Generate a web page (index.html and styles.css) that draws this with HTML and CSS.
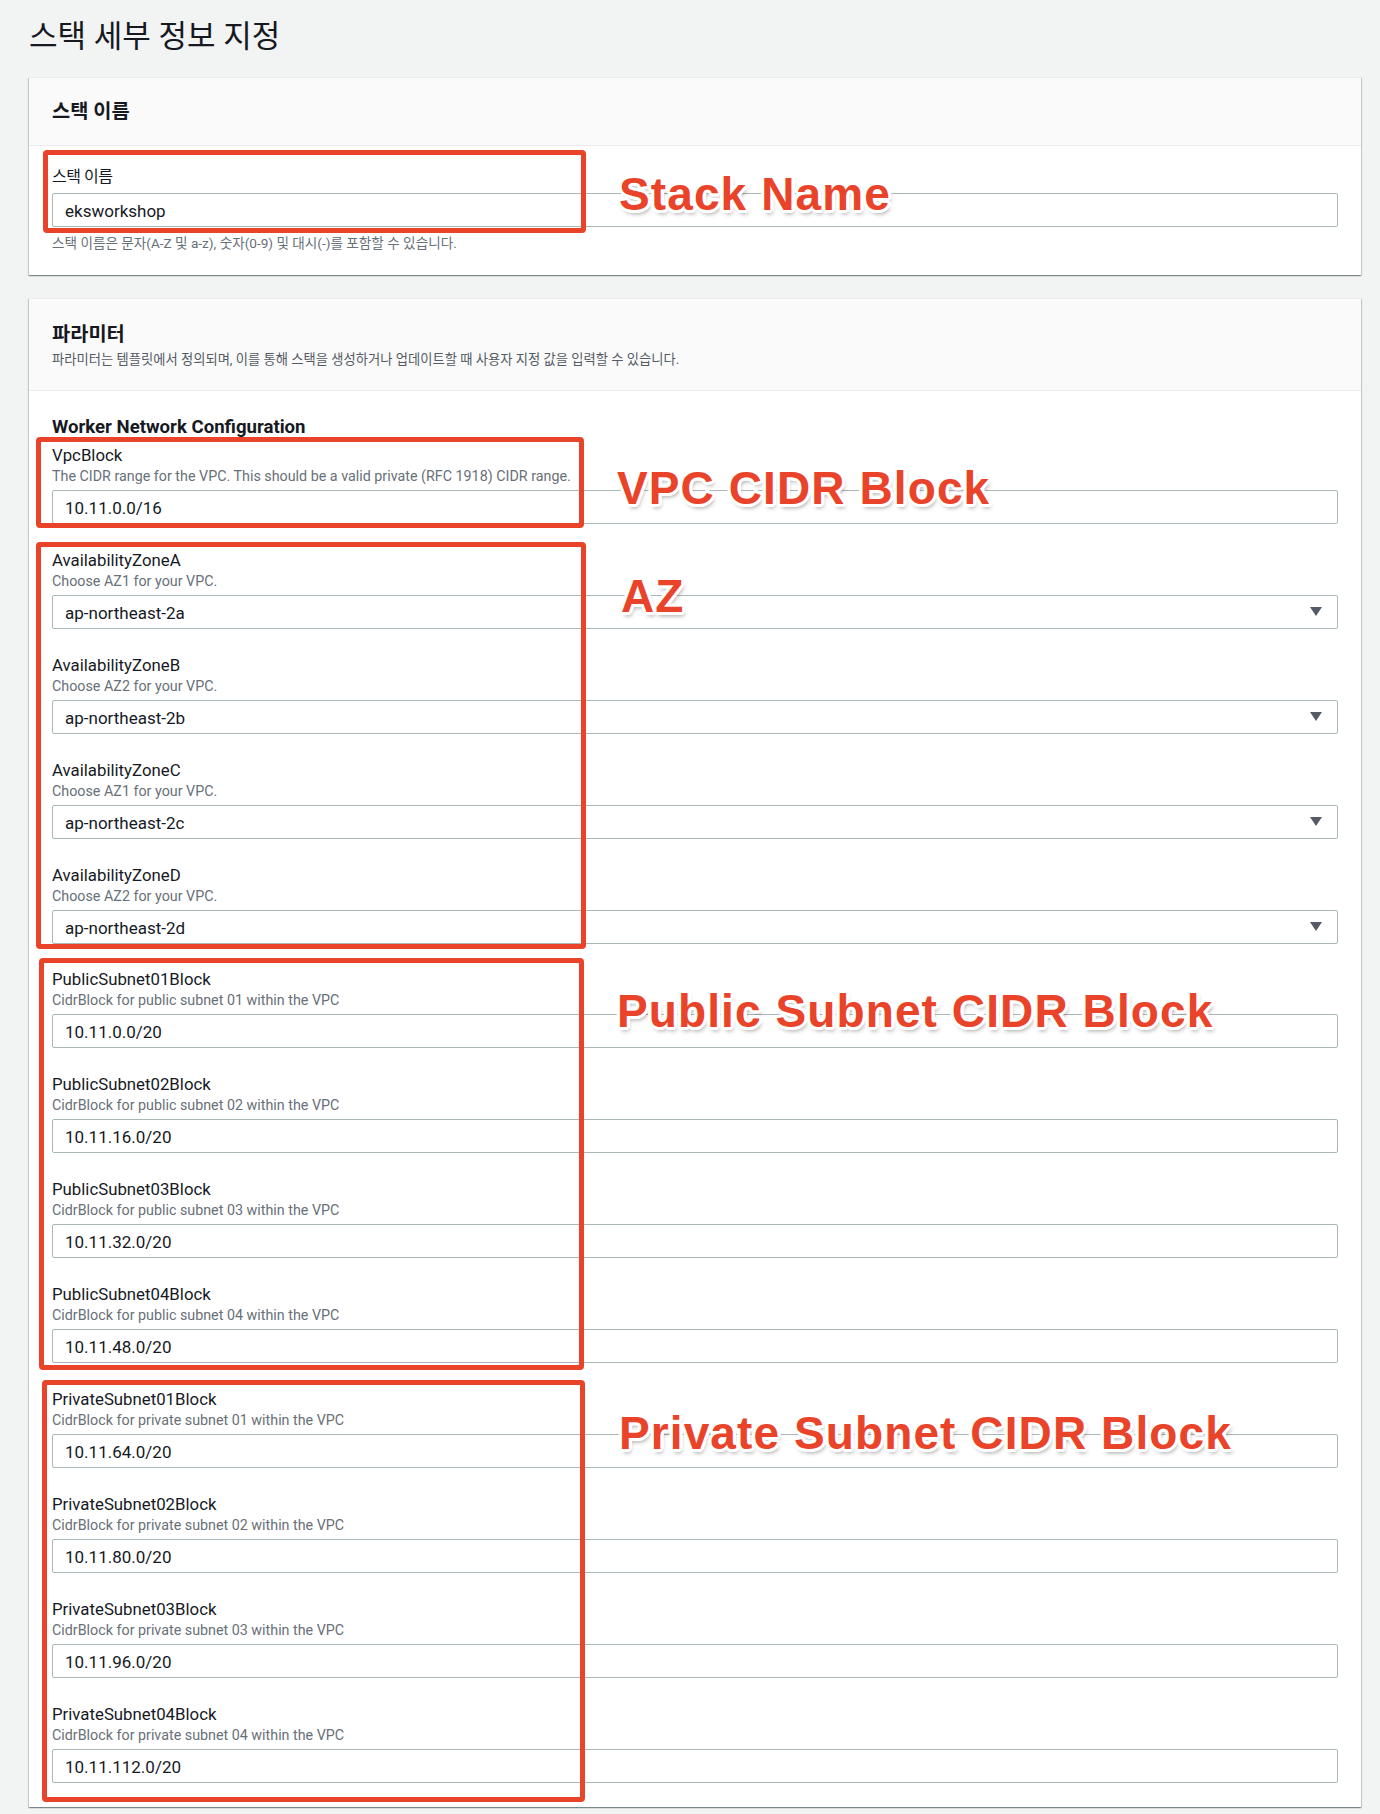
FILE: index.html
```html
<!DOCTYPE html>
<html lang="ko">
<head>
<meta charset="utf-8">
<title>스택 세부 정보 지정</title>
<link rel="stylesheet" href="styles.css">
</head>
<body>
<div class="page">
  <h1 class="title">스택 세부 정보 지정</h1>

  <section class="card card-stack">
    <div class="card-header">
      <h2 class="card-title">스택 이름</h2>
    </div>
    <div class="card-body body-stack">
      <div class="label label-ko">스택 이름</div>
      <div class="input input-stack">eksworkshop</div>
      <div class="help">스택 이름은 문자(A-Z 및 a-z), 숫자(0-9) 및 대시(-)를 포함할 수 있습니다.</div>
    </div>
  </section>

  <section class="card card-params">
    <div class="card-header">
      <h2 class="card-title">파라미터</h2>
      <p class="header-desc">파라미터는 템플릿에서 정의되며, 이를 통해 스택을 생성하거나 업데이트할 때 사용자 지정 값을 입력할 수 있습니다.</p>
    </div>
    <div class="card-body body-params">
      <h3 class="group-title">Worker Network Configuration</h3>
      <div class="fields">
        <div class="field">
          <div class="label">VpcBlock</div>
          <div class="desc">The CIDR range for the VPC. This should be a valid private (RFC 1918) CIDR range.</div>
          <div class="input">10.11.0.0/16</div>
        </div>
        <div class="field">
          <div class="label">AvailabilityZoneA</div>
          <div class="desc">Choose AZ1 for your VPC.</div>
          <div class="input select"><span>ap-northeast-2a</span><svg class="caret" width="12" height="9" viewBox="0 0 12 9"><polygon points="0,0 12,0 6,9"/></svg></div>
        </div>
        <div class="field">
          <div class="label">AvailabilityZoneB</div>
          <div class="desc">Choose AZ2 for your VPC.</div>
          <div class="input select"><span>ap-northeast-2b</span><svg class="caret" width="12" height="9" viewBox="0 0 12 9"><polygon points="0,0 12,0 6,9"/></svg></div>
        </div>
        <div class="field">
          <div class="label">AvailabilityZoneC</div>
          <div class="desc">Choose AZ1 for your VPC.</div>
          <div class="input select"><span>ap-northeast-2c</span><svg class="caret" width="12" height="9" viewBox="0 0 12 9"><polygon points="0,0 12,0 6,9"/></svg></div>
        </div>
        <div class="field">
          <div class="label">AvailabilityZoneD</div>
          <div class="desc">Choose AZ2 for your VPC.</div>
          <div class="input select"><span>ap-northeast-2d</span><svg class="caret" width="12" height="9" viewBox="0 0 12 9"><polygon points="0,0 12,0 6,9"/></svg></div>
        </div>
        <div class="field">
          <div class="label">PublicSubnet01Block</div>
          <div class="desc">CidrBlock for public subnet 01 within the VPC</div>
          <div class="input">10.11.0.0/20</div>
        </div>
        <div class="field">
          <div class="label">PublicSubnet02Block</div>
          <div class="desc">CidrBlock for public subnet 02 within the VPC</div>
          <div class="input">10.11.16.0/20</div>
        </div>
        <div class="field">
          <div class="label">PublicSubnet03Block</div>
          <div class="desc">CidrBlock for public subnet 03 within the VPC</div>
          <div class="input">10.11.32.0/20</div>
        </div>
        <div class="field">
          <div class="label">PublicSubnet04Block</div>
          <div class="desc">CidrBlock for public subnet 04 within the VPC</div>
          <div class="input">10.11.48.0/20</div>
        </div>
        <div class="field">
          <div class="label">PrivateSubnet01Block</div>
          <div class="desc">CidrBlock for private subnet 01 within the VPC</div>
          <div class="input">10.11.64.0/20</div>
        </div>
        <div class="field">
          <div class="label">PrivateSubnet02Block</div>
          <div class="desc">CidrBlock for private subnet 02 within the VPC</div>
          <div class="input">10.11.80.0/20</div>
        </div>
        <div class="field">
          <div class="label">PrivateSubnet03Block</div>
          <div class="desc">CidrBlock for private subnet 03 within the VPC</div>
          <div class="input">10.11.96.0/20</div>
        </div>
        <div class="field">
          <div class="label">PrivateSubnet04Block</div>
          <div class="desc">CidrBlock for private subnet 04 within the VPC</div>
          <div class="input">10.11.112.0/20</div>
        </div>
      </div>
    </div>
  </section>

  <div class="mark mark-stack"></div>
  <div class="mark mark-vpc"></div>
  <div class="mark mark-az"></div>
  <div class="mark mark-public"></div>
  <div class="mark mark-private"></div>

  <div class="note note-stack">Stack Name</div>
  <div class="note note-vpc">VPC CIDR Block</div>
  <div class="note note-az">AZ</div>
  <div class="note note-public">Public Subnet CIDR Block</div>
  <div class="note note-private">Private Subnet CIDR Block</div>
</div>
</body>
</html>
```

FILE: styles.css
```css
html, body {
  margin: 0;
  padding: 0;
  background: #f2f3f3;
}

body {
  font-family: Roboto, "Noto Sans CJK KR", sans-serif;
  color: #16191f;
}

.page {
  position: relative;
  width: 1332px;
  padding: 20px 19px 7px 29px;
}

.title {
  margin: 0 0 23px;
  font-size: 31px;
  line-height: 34px;
  font-weight: 400;
  color: #16191f;
}

.card {
  background: #ffffff;
  border-top: 1px solid #eaeded;
  box-shadow: 0 1px 1px 0 rgba(0, 28, 36, 0.3),
              1px 1px 1px 0 rgba(0, 28, 36, 0.15),
              -1px 1px 1px 0 rgba(0, 28, 36, 0.15);
}

.card + .card {
  margin-top: 23px;
}

.card-header {
  background: #fafafa;
  border-bottom: 1px solid #eaeded;
  padding: 22px 23px 21px;
}

.card-params .card-header {
  padding: 24px 23px 20px;
}

.card-title {
  margin: 0;
  font-size: 19.8px;
  line-height: 24px;
  font-weight: 700;
}

.header-desc {
  margin: 3px 0 0;
  font-size: 13.3px;
  line-height: 20px;
  color: #545b64;
}

.card-body {
  padding: 0 23px;
}

.body-stack {
  padding-top: 20px;
  padding-bottom: 22px;
}

.body-params {
  padding-top: 26px;
  padding-bottom: 24px;
}

.group-title {
  margin: 0 0 8px;
  font-size: 18.6px;
  line-height: 20px;
  font-weight: 700;
}

.fields {
  display: flex;
  flex-direction: column;
  gap: 25.9px;
}

.field {
  display: flex;
  flex-direction: column;
}

.label {
  padding-top: 1px;
  font-size: 16.8px;
  line-height: 19px;
  color: #16191f;
}

.label-ko {
  font-size: 16px;
  letter-spacing: -0.5px;
}

.desc {
  margin: 1px 0 4px;
  font-size: 14.3px;
  line-height: 20px;
  color: #687078;
}

.input {
  box-sizing: border-box;
  height: 34px;
  display: flex;
  align-items: center;
  padding: 2px 12px 0;
  background: #ffffff;
  border: 1px solid #aab7b8;
  border-radius: 2px;
  font-size: 17px;
  color: #16191f;
}

.input-stack {
  margin-top: 7px;
}

.select {
  justify-content: space-between;
  padding-right: 15px;
}

.caret {
  display: block;
  margin-top: -2px;
  fill: #545b64;
}

.help {
  margin-top: 6px;
  font-size: 13.6px;
  line-height: 20px;
  color: #687078;
}

/* red annotation overlays */
.mark {
  position: absolute;
  box-sizing: border-box;
  border: 5px solid #e9432a;
  border-radius: 4px;
}

.mark-stack   { left: 43px; top: 150px;  width: 543px; height: 83px; }
.mark-vpc     { left: 36px; top: 437px;  width: 548px; height: 91px; }
.mark-az      { left: 36px; top: 542px;  width: 550px; height: 407px; }
.mark-public  { left: 39px; top: 958px;  width: 545px; height: 412px; }
.mark-private { left: 42px; top: 1380px; width: 543px; height: 422px; }

.note {
  position: absolute;
  font-family: "Liberation Sans", Arial, sans-serif;
  font-weight: 700;
  font-size: 46px;
  line-height: 46px;
  letter-spacing: 1.1px;
  white-space: nowrap;
  color: #e9432a;
  text-shadow:
    -3px 0 0 #fff, 3px 0 0 #fff, 0 -3px 0 #fff, 0 3px 0 #fff,
    -2px -2px 0 #fff, 2px -2px 0 #fff, -2px 2px 0 #fff, 2px 2px 0 #fff,
    -3px -1px 0 #fff, 3px -1px 0 #fff, -3px 1px 0 #fff, 3px 1px 0 #fff,
    -1px -3px 0 #fff, 1px -3px 0 #fff, -1px 3px 0 #fff, 1px 3px 0 #fff,
    2px 4px 4px rgba(0, 0, 0, 0.35);
}

.note-stack   { left: 619px; top: 171px; }
.note-vpc     { left: 617px; top: 465px; }
.note-az      { left: 621px; top: 573px; }
.note-public  { left: 617px; top: 988px; }
.note-private { left: 619px; top: 1410px; }
```
